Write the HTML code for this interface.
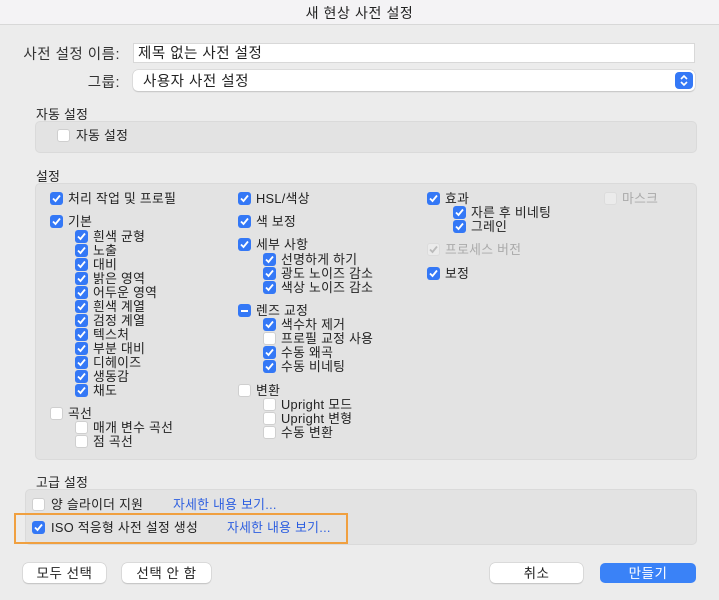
<!DOCTYPE html>
<html><head><meta charset="utf-8"><style>
*{box-sizing:border-box;margin:0;padding:0}
body{width:719px;height:600px;background:#ececec;font-family:"Liberation Sans","Noto Sans CJK KR",sans-serif;font-size:12.8px;color:#222;position:relative;overflow:hidden}
.a{position:absolute;white-space:nowrap}
.cb{position:absolute;width:13px;height:13px;border-radius:3px;background:#3478f6}
.cb svg{position:absolute;left:1px;top:1px}
.cb.off{background:#fff;border:1px solid #cfcfcf}
.cb.dis{background:#ebebeb;border:1px solid #dcdcdc}
.t{position:absolute;white-space:nowrap;line-height:14px;letter-spacing:.3px}
.box{position:absolute;background:#e3e3e3;border:1px solid #dadada;border-radius:5px}
.btn{position:absolute;background:#fff;border-radius:5px;box-shadow:0 0 0 .5px #c8c8c8,0 1px 1px #bbb;text-align:center;font-size:13.5px;line-height:22px;height:20px;letter-spacing:.5px}
</style></head><body>
<div class="a" style="left:0;top:0;width:719px;height:25px;background:#f4f3f5;border-bottom:1px solid #d8d8d8"></div>
<div class="a" style="left:0;top:5px;width:719px;text-align:center;font-size:14px;letter-spacing:.6px;line-height:16px">새 현상 사전 설정</div>
<div class="a" style="left:0;width:120px;text-align:right;top:47px;font-size:14.5px;line-height:17px;letter-spacing:.5px;color:#333">사전 설정 이름:</div>
<div class="a" style="left:133px;top:43px;width:562px;height:20px;background:#fff;border:1px solid #d8d8d8"></div>
<div class="a" style="left:138px;top:46px;font-size:14.5px;line-height:17px;letter-spacing:.5px">제목 없는 사전 설정</div>
<div class="a" style="left:0;width:120px;text-align:right;top:75px;font-size:14.5px;line-height:17px;letter-spacing:.5px;color:#333">그룹:</div>
<div class="a" style="left:133px;top:70px;width:562px;height:21px;background:#fff;border-radius:5px;box-shadow:0 0 0 .5px #ccc,0 1px 1px #bbb"></div>
<div class="a" style="left:143px;top:74px;font-size:14.5px;line-height:17px;letter-spacing:.5px">사용자 사전 설정</div>
<div class="a" style="left:675px;top:72px;width:18px;height:17px;border-radius:4px;background:#3478f6"><svg width="18" height="17"><path d="M6 7l3-3 3 3M6 10l3 3 3-3" fill="none" stroke="#fff" stroke-width="1.6"/></svg></div>

<div class="t" style="left:36px;top:108px">자동 설정</div>
<div class="box" style="left:35px;top:121px;width:662px;height:32px"></div>
<div class="cb off" style="left:57px;top:129px"></div><div class="t" style="left:76px;top:129px">자동 설정</div>

<div class="t" style="left:36px;top:170px">설정</div>
<div class="box" style="left:35px;top:183px;width:662px;height:277px"></div>

<div class="t" style="left:36px;top:476px">고급 설정</div>
<div class="box" style="left:25px;top:489px;width:672px;height:56px"></div>
<div class="a" style="left:14px;top:513px;width:334px;height:31px;border:2px solid #f0a040"></div>
<div class="cb off" style="left:32px;top:498px"></div><div class="t" style="left:51px;top:498px">양 슬라이더 지원</div>
<div class="t" style="left:173px;top:498px;color:#2c5ee0">자세한 내용 보기...</div>
<div class="t" style="left:51px;top:521px">ISO 적응형 사전 설정 생성</div>
<div class="t" style="left:227px;top:521px;color:#2c5ee0">자세한 내용 보기...</div>

<div class="btn" style="left:23px;top:563px;width:83px">모두 선택</div>
<div class="btn" style="left:122px;top:563px;width:89px">선택 안 함</div>
<div class="btn" style="left:490px;top:563px;width:93px">취소</div>
<div class="btn" style="left:600px;top:563px;width:96px;background:#3a82f7;color:#fff;box-shadow:none">만들기</div>

<div id="c"></div>
<script>
var ck='<svg width="11" height="11"><path d="M2 5.5l2.5 2.5L9 2.5" fill="none" stroke="#fff" stroke-width="1.8"/></svg>';
var items=[
[50,198,'처리 작업 및 프로필'],[50,221,'기본'],[75,236,'흰색 균형'],[75,250,'노출'],[75,264,'대비'],[75,278,'밝은 영역'],[75,292,'어두운 영역'],[75,306,'흰색 계열'],[75,320,'검정 계열'],[75,334,'텍스처'],[75,348,'부분 대비'],[75,362,'디헤이즈'],[75,376,'생동감'],[75,390,'채도'],
[50,413,'곡선','off'],[75,427,'매개 변수 곡선','off'],[75,441,'점 곡선','off'],
[238,198,'HSL/색상'],[238,221,'색 보정'],[238,244,'세부 사항'],[263,259,'선명하게 하기'],[263,273,'광도 노이즈 감소'],[263,287,'색상 노이즈 감소'],
[238,310,'렌즈 교정','mix'],[263,324,'색수차 제거'],[263,338,'프로필 교정 사용','off'],[263,352,'수동 왜곡'],[263,366,'수동 비네팅'],
[238,390,'변환','off'],[263,404,'Upright 모드','off'],[263,418,'Upright 변형','off'],[263,432,'수동 변환','off'],
[427,198,'효과'],[453,212,'자른 후 비네팅'],[453,226,'그레인'],[427,249,'프로세스 버전','dis'],[427,273,'보정'],[604,198,'마스크','dis2'],
[32,527,'',''] ];
var h='';
items.forEach(function(i){
 var s=i[3]||'',inner=ck,cls='cb',col='';
 if(s=='off'){cls+=' off';inner='';}
 else if(s=='mix'){inner='<div style="position:absolute;left:3px;top:5.5px;width:7px;height:2px;background:#fff"></div>';}
 else if(s=='dis'){cls+=' dis';inner='<svg width="11" height="11" style="position:absolute;left:0;top:0"><path d="M2 5.5l2.5 2.5L9 2.5" fill="none" stroke="#bbb" stroke-width="1.8"/></svg>';col='color:#aaa';}
 else if(s=='dis2'){cls+=' dis';inner='';col='color:#aaa';}
 h+='<div class="'+cls+'" style="left:'+i[0]+'px;top:'+(i[1]-6)+'px">'+inner+'</div>';
 if(i[2])h+='<div class="t" style="left:'+(i[0]+18)+'px;top:'+(i[1]-6)+'px;'+col+'">'+i[2]+'</div>';
});
document.getElementById('c').innerHTML=h;
</script>
</body></html>
